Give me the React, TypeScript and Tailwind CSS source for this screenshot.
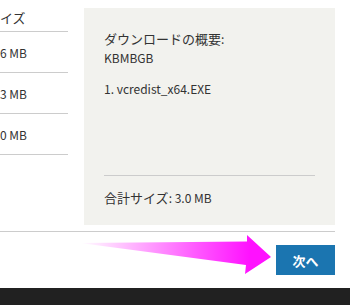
const sizes = ["6 MB", "3 MB", "0 MB"];

// latin runs are set a touch smaller than the kana, like the original page
const L = ({ children }: { children: React.ReactNode }) => (
  <span className="text-[12px]">{children}</span>
);

const App = () => {
  return (
    <div
      className="relative flex h-[305px] w-[350px] flex-col overflow-hidden bg-white text-[13px] leading-[19px] text-[#333]"
      style={{ fontFamily: '"Noto Sans CJK JP", "Noto Sans", sans-serif' }}
    >
      <div className="flex">
        <div className="w-[68px] overflow-hidden">
          <div className="h-[32px] border-b border-[#cccccc] pt-[8px]">イズ</div>
          {sizes.map((size) => (
            <div
              key={size}
              className="flex h-[41px] items-center border-b border-[#cccccc]"
            >
              <L>{size}</L>
            </div>
          ))}
        </div>

        <div className="ml-[16px] mt-[8px] flex h-[217px] w-[251px] flex-col bg-[#f2f2ee] px-[20px] pt-[21px]">
          <p>
            ダウンロードの概要<L>:</L>
          </p>
          <p>
            <L>KBMBGB</L>
          </p>
          <p className="mt-[12px]">
            <L>1. vcredist_x64.EXE</L>
          </p>
          <div className="mt-auto h-[50px] border-t border-[#cccccc] pt-[12px]">
            合計サイズ<L>: 3.0 MB</L>
          </div>
        </div>
      </div>

      <div className="mt-[6px] w-[335px] border-t border-[#cccccc]" />

      <div className="mt-[13px] flex w-[335px] justify-end">
        <button
          type="button"
          className="h-[30px] w-[59px] bg-[#1b75b0] font-bold text-white"
        >
          次へ
        </button>
      </div>

      <div className="mt-[13px] h-[17px] bg-[#212121]" />

      <svg
        className="absolute left-0 top-0"
        width={350}
        height={305}
        viewBox="0 0 350 305"
      >
        <defs>
          <linearGradient id="arrowFade" x1="80" y1="0" x2="250" y2="0" gradientUnits="userSpaceOnUse">
            <stop offset="0" stopColor="#ffffff" />
            <stop offset="0.35" stopColor="#ffaaff" />
            <stop offset="0.7" stopColor="#ff55ff" />
            <stop offset="1" stopColor="#ff11ff" />
          </linearGradient>
        </defs>
        <polygon
          points="80,243 247,241.5 247,235 271,257 245,274 246,265"
          fill="url(#arrowFade)"
        />
      </svg>
    </div>
  );
};

export default App;
